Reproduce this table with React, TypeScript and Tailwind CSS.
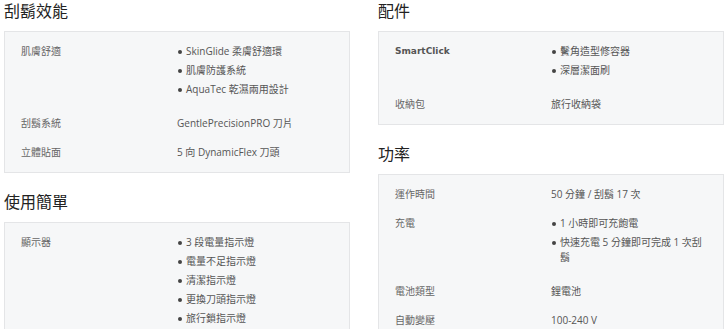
type Val = string | string[];
type Row = { label: string; value: Val; strong?: boolean };
type Section = { title: string; rows: Row[] };

const left: Section[] = [
  {
    title: "刮鬍效能",
    rows: [
      { label: "肌膚舒適", value: ["SkinGlide 柔膚舒適環", "肌膚防護系統", "AquaTec 乾濕兩用設計"] },
      { label: "刮鬍系統", value: "GentlePrecisionPRO 刀片" },
      { label: "立體貼面", value: "5 向 DynamicFlex 刀頭" },
    ],
  },
  {
    title: "使用簡單",
    rows: [
      {
        label: "顯示器",
        value: ["3 段電量指示燈", "電量不足指示燈", "清潔指示燈", "更換刀頭指示燈", "旅行鎖指示燈"],
      },
    ],
  },
];

const right: Section[] = [
  {
    title: "配件",
    rows: [
      { label: "SmartClick", value: ["鬢角造型修容器", "深層潔面刷"], strong: true },
      { label: "收納包", value: "旅行收納袋" },
    ],
  },
  {
    title: "功率",
    rows: [
      { label: "運作時間", value: "50 分鐘 / 刮鬍 17 次" },
      { label: "充電", value: ["1 小時即可充飽電", "快速充電 5 分鐘即可完成 1 次刮鬍"] },
      { label: "電池類型", value: "鋰電池" },
      { label: "自動變壓", value: "100-240 V" },
    ],
  },
];

function SpecRow({ row }: { row: Row }) {
  return (
    <div className="grid grid-cols-2 py-[7px]">
      <div
        className={
          row.strong
            ? "pr-4 text-[9px] font-bold text-[#555] font-['DejaVu_Sans',sans-serif]"
            : "pr-4 text-[#666]"
        }
      >
        {row.label}
      </div>
      {Array.isArray(row.value) ? (
        <ul className="pb-[1px]">
          {row.value.map((item) => (
            <li key={item} className="mb-[4px] flex text-[#555]">
              <span className="mt-[6px] mr-[4px] ml-[1px] h-[4px] w-[4px] shrink-0 rounded-full bg-[#444]" />
              <span>{item}</span>
            </li>
          ))}
        </ul>
      ) : (
        <div className="text-[#555]">{row.value}</div>
      )}
    </div>
  );
}

function SpecSection({ section, first }: { section: Section; first?: boolean }) {
  return (
    <section className={first ? "" : "mt-[18px]"}>
      <h2 className="mb-[8px] text-[16px] leading-[23px] text-[#222]">{section.title}</h2>
      <div className="border border-[#e4e5e7] bg-[#f6f7f8] px-[16px] py-[5px]">
        {section.rows.map((r) => (
          <SpecRow key={r.label} row={r} />
        ))}
      </div>
    </section>
  );
}

export default function App() {
  return (
    <div className="flex h-[329px] w-[728px] gap-[28px] overflow-hidden bg-white px-[4px] font-['Open_Sans','Noto_Sans_CJK_TC',sans-serif] text-[10px] leading-[15px]">
      <div className="flex-1">
        {left.map((s, i) => (
          <SpecSection key={s.title} section={s} first={i === 0} />
        ))}
      </div>
      <div className="flex-1">
        {right.map((s, i) => (
          <SpecSection key={s.title} section={s} first={i === 0} />
        ))}
      </div>
    </div>
  );
}
